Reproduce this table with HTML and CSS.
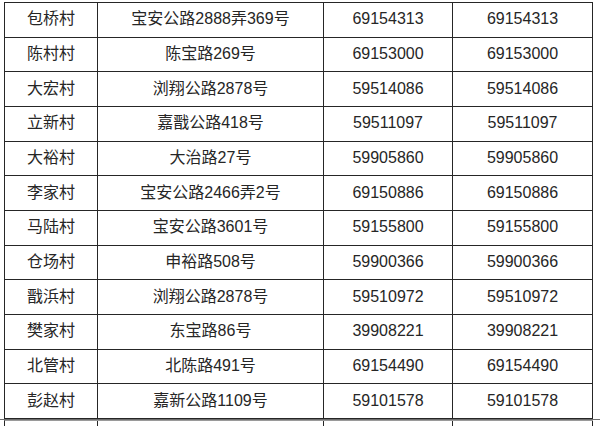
FILE: index.html
```html
<!DOCTYPE html>
<html lang="zh-CN">
<head>
<meta charset="utf-8">
<title>村委会联系方式</title>
<link rel="stylesheet" href="styles.css">
</head>
<body>
<div class="sheet">
  <div class="grid">
    <div class="cell">包桥村</div><div class="cell">宝安公路2888弄369号</div><div class="cell">69154313</div><div class="cell">69154313</div>
    <div class="cell">陈村村</div><div class="cell">陈宝路269号</div><div class="cell">69153000</div><div class="cell">69153000</div>
    <div class="cell">大宏村</div><div class="cell">浏翔公路2878号</div><div class="cell">59514086</div><div class="cell">59514086</div>
    <div class="cell">立新村</div><div class="cell">嘉戬公路418号</div><div class="cell">59511097</div><div class="cell">59511097</div>
    <div class="cell">大裕村</div><div class="cell">大治路27号</div><div class="cell">59905860</div><div class="cell">59905860</div>
    <div class="cell">李家村</div><div class="cell">宝安公路2466弄2号</div><div class="cell">69150886</div><div class="cell">69150886</div>
    <div class="cell">马陆村</div><div class="cell">宝安公路3601号</div><div class="cell">59155800</div><div class="cell">59155800</div>
    <div class="cell">仓场村</div><div class="cell">申裕路508号</div><div class="cell">59900366</div><div class="cell">59900366</div>
    <div class="cell">戬浜村</div><div class="cell">浏翔公路2878号</div><div class="cell">59510972</div><div class="cell">59510972</div>
    <div class="cell">樊家村</div><div class="cell">东宝路86号</div><div class="cell">39908221</div><div class="cell">39908221</div>
    <div class="cell">北管村</div><div class="cell">北陈路491号</div><div class="cell">69154490</div><div class="cell">69154490</div>
    <div class="cell">彭赵村</div><div class="cell">嘉新公路1109号</div><div class="cell">59101578</div><div class="cell">59101578</div>
  </div>
  <div class="break"></div>
  <div class="grid next">
    <div class="cell"></div><div class="cell"></div><div class="cell"></div><div class="cell"></div>
  </div>
</div>
</body>
</html>
```
FILE: styles.css
```css
html, body {
  margin: 0;
  padding: 0;
  background: #ffffff;
}

body {
  width: 600px;
  height: 426px;
  overflow: hidden;
  font-family: "Liberation Sans", "Noto Sans CJK SC", sans-serif;
  font-size: 16px;
  color: #262626;
}

.sheet {
  padding-top: 2px;
}

.grid {
  margin-left: 4px;
  width: 589px;
  display: grid;
  grid-template-columns: 93px 226px 129px 140px;
  grid-auto-rows: 34.667px;
  border-top: 1px solid #262626;
  border-left: 1px solid #262626;
  box-sizing: border-box;
}

.cell {
  box-sizing: border-box;
  border-right: 1px solid #262626;
  border-bottom: 1px solid #262626;
  display: flex;
  align-items: center;
  justify-content: center;
  white-space: nowrap;
  line-height: 1;
  padding-bottom: 1px;
}

.break {
  height: 1px;
  width: 600px;
  background: #6e6e6e;
}

.grid.next {
  border-top: 1px solid #9a9a9a;
  grid-auto-rows: 10px;
}

.grid.next .cell {
  border-bottom: none;
}
```
